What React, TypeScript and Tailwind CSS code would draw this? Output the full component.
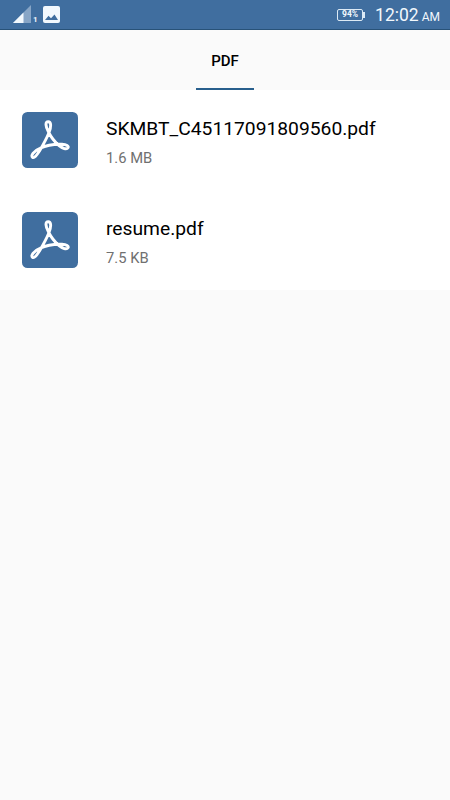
type PdfFile = { name: string; size: string };

const files: PdfFile[] = [
  { name: "SKMBT_C45117091809560.pdf", size: "1.6 MB" },
  { name: "resume.pdf", size: "7.5 KB" },
];

function SignalIcon() {
  return (
    <svg className="h-[18px] w-[19px]" viewBox="0 0 19 18">
      <path d="M0 18L18 0V18Z" fill="#87a5c6" />
      <path d="M0 18L10.5 7.5V18Z" fill="#f2f8fd" />
    </svg>
  );
}

function PictureIcon() {
  return (
    <svg className="h-[17px] w-[17px]" viewBox="0 0 17 17">
      <rect width="17" height="17" rx="2" fill="#f2f8fd" />
      <path d="M2 14L5.5 9.8L8 12.2L11.5 8.5L15 14Z" fill="#406e9f" />
    </svg>
  );
}

function BatteryIcon() {
  return (
    <div className="flex items-center">
      <div className="flex h-[12px] w-[26px] items-center justify-center rounded-[2px] border border-[#dceaf5] text-[8.5px] leading-none font-bold">
        94%
      </div>
      <div className="h-[6px] w-[2px] bg-[#dceaf5]" />
    </div>
  );
}

function PdfIcon() {
  return (
    <svg className="h-14 w-14 shrink-0" viewBox="0 0 56 56" fill="none">
      <rect width="56" height="56" rx="5.5" fill="#406e9f" />
      <path
        d="M26.5 20C23.2 14 23.2 9.7 26.2 9.7C29.5 9.7 29.2 15 27 20.5C24.5 27 21 33 17.5 39C14.5 43.5 12.3 46.4 10.6 45.4C8.3 44 11.5 38.8 18 36.3C24.5 33.3 33 32 40 32.3C44.5 32.5 47 34 46 35.8C44.6 38 40.5 36.3 37 33.5C32.8 30 29 25 26.5 20Z"
        stroke="#fff"
        strokeWidth="2.9"
        strokeLinejoin="round"
      />
    </svg>
  );
}

export default function App() {
  return (
    <div className="flex h-[800px] w-[450px] flex-col bg-[#fafafa] font-['Roboto',sans-serif]">
      <header className="flex h-[30px] shrink-0 items-center justify-between border-b border-[#285278] bg-[#406e9f] pr-[10px] pl-[13px] text-[#f2f8fd]">
        <div className="flex items-end pb-px">
          <SignalIcon />
          <span className="ml-px w-[10px] text-[8px] leading-[7px] font-bold">1</span>
          <PictureIcon />
        </div>
        <div className="flex items-center">
          <BatteryIcon />
          <div className="ml-[10px] pt-[2px] leading-none">
            <span className="text-[17.5px]">12:02</span>
            <span className="ml-[3px] text-[12px]">AM</span>
          </div>
        </div>
      </header>

      <nav className="flex h-[60px] shrink-0 justify-center">
        <button className="w-[58px] border-b-[2.5px] border-[#285f8d] pt-[5px] text-[15px] font-medium text-black">
          PDF
        </button>
      </nav>

      <ul className="bg-white">
        {files.map((file) => (
          <li key={file.name} className="flex h-[100px] items-center gap-7 px-[22px]">
            <PdfIcon />
            <div className="pt-[3px]">
              <p className="text-[19.25px] leading-[29px] text-black">{file.name}</p>
              <p className="mt-[3px] text-[14.75px] leading-6 text-[#707070]">{file.size}</p>
            </div>
          </li>
        ))}
      </ul>
    </div>
  );
}
